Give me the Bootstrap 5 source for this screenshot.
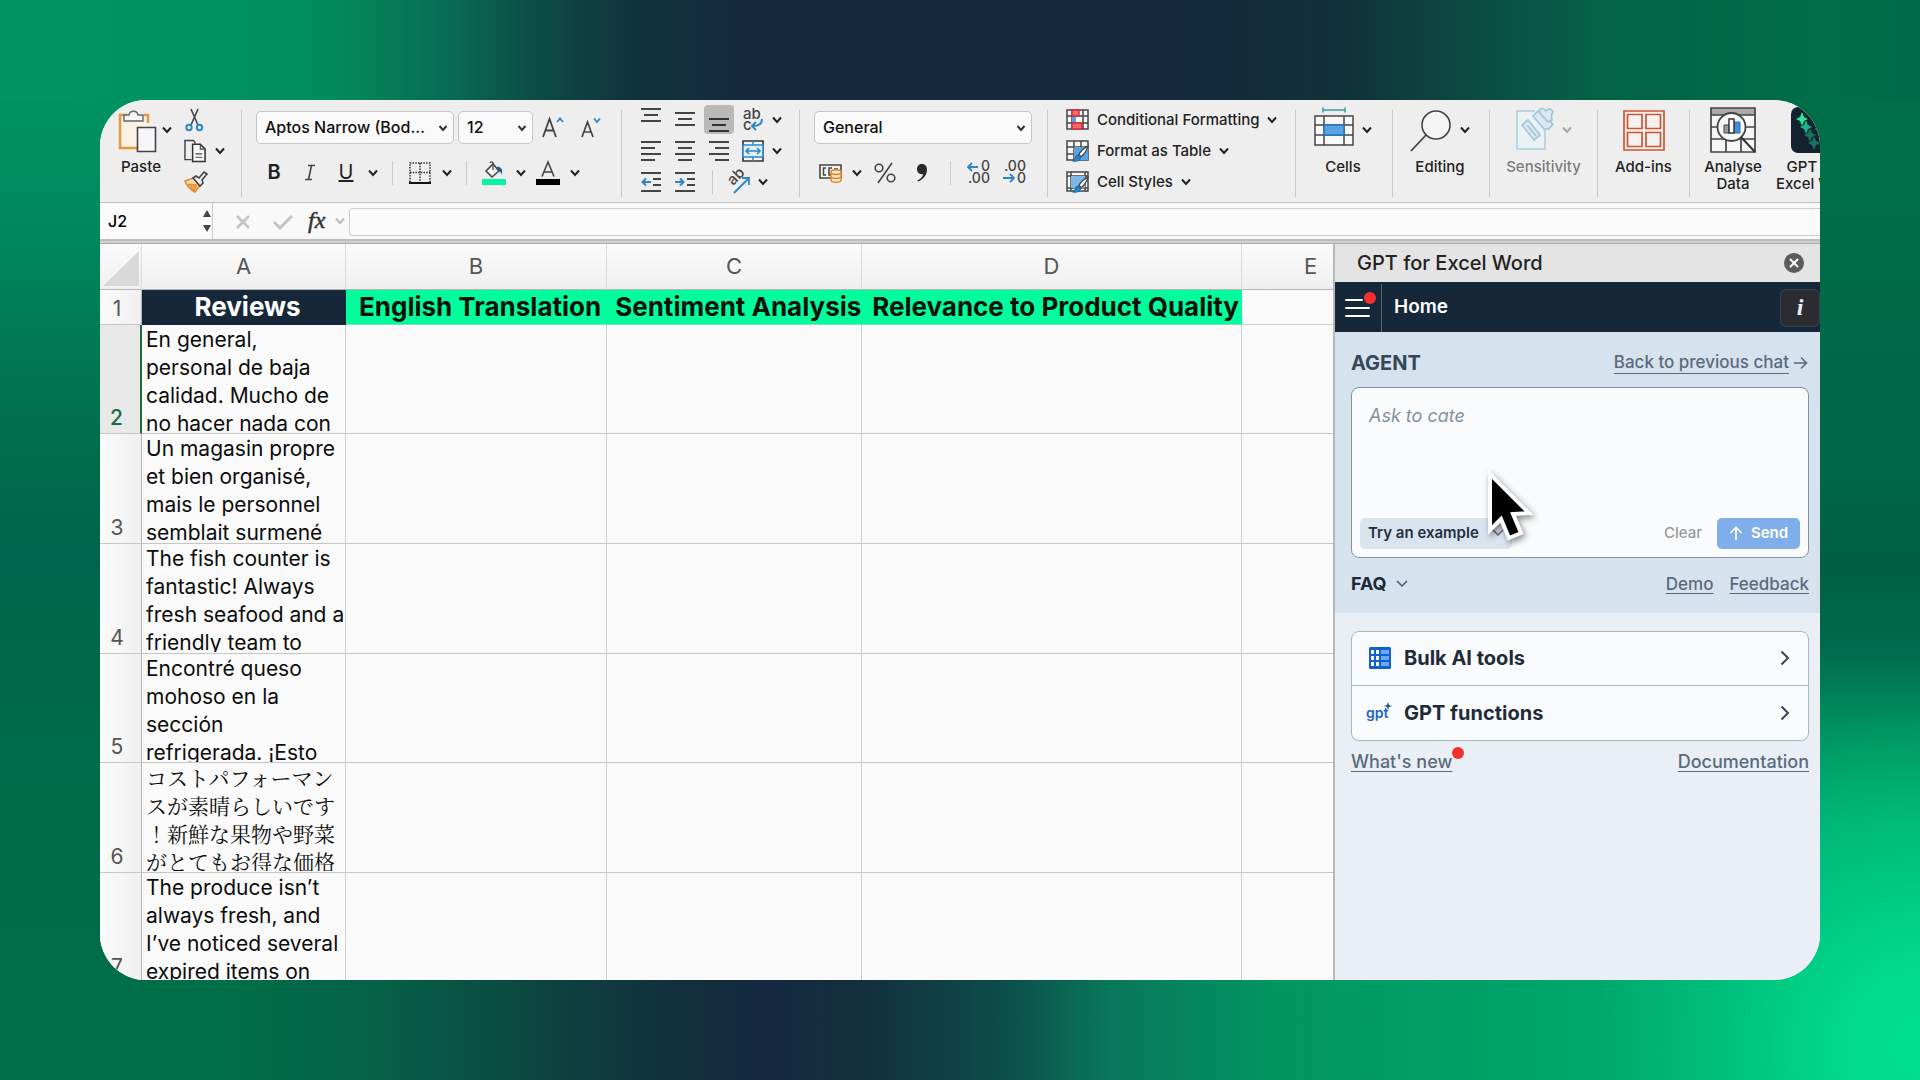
<!DOCTYPE html>
<html lang="en">
<head>
<meta charset="utf-8">
<meta name="viewport" content="width=device-width, initial-scale=1">
<title>GPT for Excel Word</title>
<link href="https://cdn.jsdelivr.net/npm/bootstrap@5.3.0/dist/css/bootstrap.min.css" rel="stylesheet">
<style>
:root{--ink:#222;--navy:#17273a;--mint:#00ff9c;--rule:#c9c9c9;--slate:#5a6b7e}
body{font-family:Inter,"Liberation Sans",sans-serif;color:var(--ink);margin:0}
button{background:none;border:0;padding:0;color:inherit;font:inherit}
svg{display:block;flex:none;overflow:visible}
.stage{height:100vh;padding:100px;background:
 radial-gradient(ellipse 340px 360px at 100% 97%,rgba(0,224,144,1) 0,rgba(0,224,144,.88) 23%,rgba(0,224,144,.45) 56%,rgba(0,224,144,0) 95%),
 linear-gradient(90deg,#009562 0,#00905f 15%,#058358 19%,#076a54 23.6%,#0c4c45 28%,#11333d 33%,#14283e 39.5%,#14283e 60.5%,#112f39 69%,#0c4a42 76.5%,#046246 83%,#006e48 95%,#006a48 100%) top/100% 101px no-repeat,
 linear-gradient(90deg,#006e48 0,#006e48 12%,#056046 20%,#0c4540 28%,#12303c 35%,#142840 40%,#13303d 45%,#0c4c49 52%,#08785a 58%,#019461 66%,#00a067 76%,#00a86c 84%,#00ab6e 100%) bottom/100% 101px no-repeat,
 linear-gradient(180deg,#009562 0,#009060 14%,#00835a 25%,#006e4c 40%,#00644a 52%,#006a48 62%,#006e48 91%) left/50% 100% no-repeat,
 linear-gradient(180deg,#006e48 0,#006e48 18%,#006446 44%,#005f42 53%,#006b4c 60%,#008e5e 67%,#00a46a 76%,#00ab6e 91%) right/50% 100% no-repeat}
.app{border-radius:46px;overflow:hidden;background:#fafafa;position:relative}
/* ribbon */
.ribbon{height:103px;background:#eee;border-bottom:1px solid #c0c0c0;white-space:nowrap;overflow:hidden;font-size:15px;font-weight:500;line-height:17px}
.ribbon>*{flex:none}
.sep{width:1px;height:87px;margin-top:10px;background:var(--rule)}
.div{width:20px;flex:none}
.div i{display:block;width:1px;height:24px;margin:auto;background:var(--rule)}
.w34{width:34px}.w36{width:36px}.w18{width:18px}.w38{width:38px}
.tool{display:flex;align-items:center;justify-content:center;height:31px;flex:none}
.tool.on{background:#b9b9b9;border-radius:4px;height:29px;width:30px;margin:0 2px}
.rows{padding-top:4px}
.g-align .w18{width:14px}
.two{padding-top:11px}
.two .line{margin-top:13px;height:31px}
.big{padding-top:7px;text-align:center}
.big .pic{height:46px;margin-bottom:5px}
.g-clip{width:141px;padding-left:18px}.g-font{width:379px;padding-left:14px}.g-align{width:177px;padding-left:12px}
.g-num{width:247px;padding-left:14px}.g-style{width:247px;padding-left:18px}
.g-96{width:94px;margin-right:2px}.g-107{width:107px}.g-91{width:91px}.g-86{width:86px}.g-76{width:76px}
.ribbon select{appearance:none;height:33px;border:1px solid #c6c6c6;border-radius:5px;background:#fafafa url("data:image/svg+xml,%3Csvg xmlns='http://www.w3.org/2000/svg' width='10' height='8'%3E%3Cpath d='M1.500 2l3.500 4L8.500 2' fill='none' stroke='%23333' stroke-width='2'/%3E%3C/svg%3E") no-repeat right 5px center;font-size:16px;font-weight:500;padding:0 18px 0 8px;color:#111}
.s-face{width:198px}.s-size{width:75px}.s-fmt{width:218px}
.gly{font-size:20px}
/* formula bar */
.fbar{height:36px;background:#f9f9f9}
.fbar .tool{padding-top:3px}
.namebox{width:113px;border-right:1px solid var(--rule);background:#fbfbfb;margin-right:12px}
.namebox input{width:80px;border:0;background:none;font-size:16px;font-weight:500;padding:0 0 0 8px}
.fbar .fin{border:1px solid #cfcfcf;border-right:0;border-radius:4px 0 0 4px;background:#fbfbfb;height:28px;margin:5px 0 0 4px;outline:0}
.band{height:5px;background:#d0d0d0;border-top:2px solid #bcbcbc;border-bottom:1px solid #aaa}
/* sheet */
.sheet{overflow:hidden;min-width:0;background:#fafafa}
.grid{table-layout:fixed;width:1280px;border-collapse:separate;border-spacing:0}
.grid th,.grid td{padding:0;border-right:1px solid #cecece;border-bottom:1px solid #c6c6c6;overflow:hidden}
.grid thead th{height:46px;background:linear-gradient(#fbfbfb,#f0f0f0);border-bottom-color:#b5b5b5;border-right-color:#dcdcdc;font-size:22px;font-weight:400;color:#555;text-align:center;vertical-align:middle}
.grid tbody th{background:linear-gradient(90deg,#fbfbfb,#f0f0f0);border-right-color:#b5b5b5;font-size:21px;font-weight:400;color:#555;text-align:center;vertical-align:bottom;line-height:25px;padding:0 7px 3px 0}
.grid .titles th,.grid .titles td{height:35px}
.grid .titles td{font-size:26px;font-weight:700;line-height:34px;color:#06110c;white-space:pre;text-align:center;border-color:var(--mint);border-bottom-color:#7fe0b5;background:var(--mint);padding-left:2px}
.grid .titles td.rev{background:var(--navy);color:#fff;border-color:var(--navy)}
.grid .titles td.none{background:#fafafa;border-color:#cecece}
.grid .rec td{height:110px}
.grid .rec:nth-child(3n+2) td{height:109px}
.txt{height:108px;overflow:hidden;padding:1px 0 0 4px;font-size:21px;line-height:28px;color:#0c0c0c;white-space:nowrap}
.jp{font-family:"Noto Serif CJK JP","Noto Sans CJK JP",sans-serif;padding-top:0}
.grid .sel th{background:#e9e9e9;color:#1c6b43;font-weight:500;border-right:2px solid #1c6b43}
/* pane */
.pane{width:487px;flex:none;border-left:2px solid #b5b8bc;background:#e9eff5}
.ptitle{height:38px;background:#e4e4e4;font-size:20px;font-weight:500;padding:0 16px 0 22px}
.pnav{height:50px;background:var(--navy);color:#fff;padding-top:2px}
.burger{width:47px;border-right:1px solid #56657a;padding-left:10px}
.home{font-size:19px;font-weight:600;padding-left:12px}
.info{width:40px;height:38px;border:1px solid #3a4656;border-radius:6px;background:#2b2c31;font:italic 700 24px "Liberation Serif",serif;color:#eee}
.agent{background:#d6e2ed;padding:18px 11px 0 16px;height:281px}
.agent h2{font-size:20px;font-weight:700;color:#34475a;line-height:26px;margin:0}
.pane a{color:var(--slate);font-weight:500;text-decoration:underline;text-underline-offset:3px;text-decoration-thickness:1px}
.pane .back{text-underline-offset:5px}
.f17{font-size:17px}.f18{font-size:18px}
.ask{margin-top:11px;height:171px;border:1px solid #7e93a6;border-radius:8px;background:#fafbfc;padding:8px}
.ask textarea{flex:1;border:0;outline:0;resize:none;background:none;font-size:18px;line-height:24px;padding:8px 9px}
.ask textarea::placeholder{font-style:italic;color:#84919d;opacity:1}
.try{height:31px;width:152px;border-radius:5px;background:#dae4ee;font-size:15px;font-weight:600;color:#22303f;padding:0 8px}
.clear{color:#999;font-size:15px;font-weight:500}
.send{height:31px;width:83px;border-radius:5px;background:#80aeea;color:#fff;font-size:15px;font-weight:600;margin-left:15px}
.faqrow{margin-top:16px;line-height:20px}
.faq{font-size:18px;font-weight:700;color:#1c2937}
.tools{margin:18px 11px 0 16px}
.tools .list-group-item{height:55px;border-color:#a9b6c6;background:#fafbfc;font-size:20px;font-weight:700;color:#1f2b38;padding:0 18px 0 14px;text-decoration:none}
.list-group{--bs-list-group-border-radius:8px}
.foot{margin:7px 11px 0 16px}
.dot{position:absolute;width:12px;height:12px;border-radius:50%;background:#f5302f}
.d-burger{left:29px;top:8px}.d-new{right:-12px;top:-1px}
.ptr{position:absolute;left:1384px;top:366px;filter:drop-shadow(2px 3px 3px rgba(0,0,0,.45))}
</style>
<script src="https://cdn.jsdelivr.net/npm/bootstrap@5.3.0/dist/js/bootstrap.bundle.min.js"></script>
</head>
<body>
<svg width="0" height="0" class="position-absolute" aria-hidden="true">
 <symbol id="chev" viewBox="0 0 10 8"><path d="M1 1.500l4 4.500 4-4.500" fill="none" stroke="currentColor" stroke-width="2"/></symbol>
 <symbol id="right" viewBox="0 0 10 16"><path d="M1.500 1.500L8 8l-6.500 6.500" fill="none" stroke="#3a4654" stroke-width="2"/></symbol>
 <symbol id="brush" viewBox="0 0 16 16"><path d="M15 1C11 3 8 6 6.500 9l2 2C11 9 14 5 15 1z" fill="#fff" stroke="#444" stroke-width="1.200"/><path d="M6 9.500c-2 0-2.500 1.500-3 3C2.600 14 2 14.500 1 15c3 .5 6.500 0 7-3z" fill="#2f86cf" stroke="#1b6cb4"/></symbol>
</svg>
<main class="stage">
<div class="app h-100 d-flex flex-column">

 <div class="ribbon d-flex">
  <div class="g-clip d-flex">
   <button class="big align-self-start">
    <span class="pic d-flex align-items-center gap-1">
     <svg width="40" height="46" viewBox="0 0 40 46"><path d="M4 9h25v32H4z" fill="#fbf2e3"/><path d="M9 8H2v33h18M26 8h4v8" fill="none" stroke="#e39a3f" stroke-width="2.500"/><path d="M6 14V8h5c1-5 8-5 9 0h5v6z" fill="#f6f6f6" stroke="#666" stroke-width="1.400"/><path d="M19.500 20.500h18v24h-18z" fill="#f8f6fa" stroke="#444" stroke-width="1.600"/></svg>
     <svg width="10" height="8"><use href="#chev"/></svg></span>
    <span class="d-block me-2">Paste</span>
   </button>
   <div class="rows ms-2 ps-1">
    <button class="tool justify-content-start" aria-label="Cut"><svg width="22" height="24" viewBox="0 0 22 24"><path d="M7 1l7 16M14 1L7 17" stroke="#444" stroke-width="1.600" fill="none"/><g fill="none" stroke="#2b87c8" stroke-width="2"><circle cx="5" cy="19.500" r="2.700"/><circle cx="15.500" cy="19.500" r="2.700"/></g></svg></button>
    <button class="tool gap-2" aria-label="Copy"><svg width="23" height="24" viewBox="0 0 24 24"><path d="M8 21H1V1h9l2 3" fill="none" stroke="#444" stroke-width="1.500"/><path d="M9 5h8l5 5v13H9z" fill="#f8f8f8" stroke="#333" stroke-width="1.600"/><path d="M17 5v5h5M12 15h7M12 18.500h7" fill="none" stroke="#444" stroke-width="1.200"/></svg><svg width="10" height="8"><use href="#chev"/></svg></button>
    <button class="tool justify-content-start" aria-label="Format painter"><svg width="24" height="22" viewBox="0 0 24 22"><path d="M1 10l8-3 7 7-5 7C7 19 3 15 1 10z" fill="#f7dcb4" stroke="#e0862b" stroke-width="1.500"/><path d="M4 13l9 1-3 6z" fill="#f0a24a" stroke="#e0862b"/><path d="M9 7l3-2 3 2 5-6 3 2-5 6 1 3-3 3z" fill="#eee" stroke="#444" stroke-width="1.600"/></svg></button>
   </div>
  </div>
  <div class="sep"></div>
  <div class="g-font two">
   <div class="d-flex align-items-center">
    <select class="s-face" aria-label="Font"><option>Aptos Narrow (Bod...</option></select>
    <select class="s-size ms-1" aria-label="Font size"><option>12</option></select>
    <button class="ms-2" aria-label="Grow font"><svg width="24" height="26" viewBox="0 0 24 26"><path d="M2 22L8.500 4 15 22M4.500 15.500h8" fill="none" stroke="#444" stroke-width="1.800"/><path d="M16 7l3-3.500L22 7" fill="none" stroke="#2b87c8" stroke-width="1.800"/></svg></button>
    <button class="ms-3" aria-label="Shrink font"><svg width="22" height="26" viewBox="0 0 22 26"><path d="M1 22L6.500 7 12 22M3 17h7" fill="none" stroke="#444" stroke-width="1.700"/><path d="M13 3.500L16 7l3-3.500" fill="none" stroke="#2b87c8" stroke-width="1.800"/></svg></button>
   </div>
   <div class="line d-flex align-items-center">
    <button class="tool w36 gly fw-semibold">B</button>
    <button class="tool w36" aria-label="Italic"><svg width="12" height="18" viewBox="0 0 12 18"><path d="M4 1.500h7M1 15.500h7M7.500 1.500l-3 14" fill="none" stroke="#444" stroke-width="1.600"/></svg></button>
    <button class="tool w36 gly fw-normal text-decoration-underline">U</button>
    <button class="tool w18" aria-label="Underline options"><svg width="10" height="8"><use href="#chev"/></svg></button>
    <span class="div"><i></i></span>
    <button class="tool w36" aria-label="Borders"><svg width="22" height="22" viewBox="0 0 22 22"><path d="M1 20V1h20v19M11 1v19M1 10.500h20" fill="none" stroke="#333" stroke-width="1.500" stroke-dasharray="1.500 1.200"/><path d="M0 21h22" stroke="#111" stroke-width="2"/></svg></button>
    <button class="tool w18" aria-label="Border options"><svg width="10" height="8"><use href="#chev"/></svg></button>
    <span class="div"><i></i></span>
    <button class="tool w36" aria-label="Fill colour"><svg width="24" height="24" viewBox="0 0 24 24"><path d="M4 10l7-7 6 7-7 6z" fill="#f4f4f4" stroke="#444" stroke-width="1.600"/><path d="M11 9V2c0-1.500-3-1.500-3 0" fill="none" stroke="#444" stroke-width="1.200"/><path d="M15 6c4-1 6 3 5 8-1-3-2-4-4-4z" fill="#1b5c93"/><path d="M0 18h24v6H0z" fill="#0cf3a0"/></svg></button>
    <button class="tool w18" aria-label="Fill options"><svg width="10" height="8"><use href="#chev"/></svg></button>
    <button class="tool w36" aria-label="Font colour"><svg width="24" height="24" viewBox="0 0 24 24"><path d="M6 15.500L12 1l6 14.500M8 11h8" fill="none" stroke="#444" stroke-width="1.600"/><path d="M0 18h24v6H0z" fill="#000"/></svg></button>
    <button class="tool w18" aria-label="Font colour options"><svg width="10" height="8"><use href="#chev"/></svg></button>
   </div>
  </div>
  <div class="sep"></div>
  <div class="g-align rows">
   <div class="d-flex align-items-center">
    <button class="tool w34" aria-label="Align top"><svg width="20" height="24" viewBox="0 0 20 24"><path d="M0 1h20M3 7h14M0 13h20" stroke="#444" stroke-width="2"/></svg></button>
    <button class="tool w34" aria-label="Align middle"><svg width="20" height="24" viewBox="0 0 20 24"><path d="M0 5h20M3 11h14M0 17h20" stroke="#444" stroke-width="2"/></svg></button>
    <button class="tool on" aria-label="Align bottom"><svg width="20" height="24" viewBox="0 0 20 24"><path d="M0 11h20M3 17h14M0 23h20" stroke="#333" stroke-width="2"/></svg></button>
    <button class="tool w34" aria-label="Wrap text"><svg width="20" height="26" viewBox="0 0 20 26"><text x="0" y="12" font-size="15" fill="#444">ab</text><text x="0" y="23" font-size="15" fill="#444">c</text><path d="M19 12c0 5-3 7-9 7M13 15l-4 4 4 4" fill="none" stroke="#2b87c8" stroke-width="2"/></svg></button>
    <button class="tool w18" aria-label="Wrap options"><svg width="10" height="8"><use href="#chev"/></svg></button>
   </div>
   <div class="d-flex align-items-center">
    <button class="tool w34" aria-label="Align left"><svg width="20" height="20" viewBox="0 0 20 20"><path d="M0 1h20M0 7h14M0 13h20M0 19h14" stroke="#444" stroke-width="2"/></svg></button>
    <button class="tool w34" aria-label="Align centre"><svg width="20" height="20" viewBox="0 0 20 20"><path d="M0 1h20M3 7h14M0 13h20M3 19h14" stroke="#444" stroke-width="2"/></svg></button>
    <button class="tool w34" aria-label="Align right"><svg width="20" height="20" viewBox="0 0 20 20"><path d="M0 1h20M6 7h14M0 13h20M6 19h14" stroke="#444" stroke-width="2"/></svg></button>
    <button class="tool w34" aria-label="Merge"><svg width="22" height="22" viewBox="0 0 22 22"><path d="M1 1h20v20H1z" fill="#f6f6f6" stroke="#333" stroke-width="1.600"/><path d="M1 5h20v12H1zM11 1v4M11 17v4" fill="#dff0fa" stroke="#2b87c8" stroke-width="1.500"/><path d="M4 11h14M7 8l-3 3 3 3M15 8l3 3-3 3" fill="none" stroke="#2b87c8" stroke-width="1.600"/></svg></button>
    <button class="tool w18" aria-label="Merge options"><svg width="10" height="8"><use href="#chev"/></svg></button>
   </div>
   <div class="d-flex align-items-center">
    <button class="tool w34" aria-label="Decrease indent"><svg width="20" height="20" viewBox="0 0 20 20"><path d="M0 1h20M12 7h8M12 13h8M0 19h20" stroke="#444" stroke-width="2"/><path d="M1 10h9M5 6.500L1.500 10 5 13.500" fill="none" stroke="#2b87c8" stroke-width="2"/></svg></button>
    <button class="tool w34" aria-label="Increase indent"><svg width="20" height="20" viewBox="0 0 20 20"><path d="M0 1h20M12 7h8M12 13h8M0 19h20" stroke="#444" stroke-width="2"/><path d="M0 10h9M5 6.500L8.500 10 5 13.500" fill="none" stroke="#2b87c8" stroke-width="2"/></svg></button>
    <span class="div"><i></i></span>
    <button class="tool w34" aria-label="Orientation"><svg width="24" height="24" viewBox="0 0 24 24"><text transform="translate(6 16) rotate(-45)" font-size="15" fill="#444">ab</text><path d="M7 23L22 8M15 8h7v7" fill="none" stroke="#2b87c8" stroke-width="1.800"/></svg></button>
    <button class="tool w18" aria-label="Orientation options"><svg width="10" height="8"><use href="#chev"/></svg></button>
   </div>
  </div>
  <div class="sep"></div>
  <div class="g-num two">
   <select class="s-fmt" aria-label="Number format"><option>General</option></select>
   <div class="line d-flex align-items-center">
    <button class="tool w34" aria-label="Currency"><svg width="24" height="20" viewBox="0 0 24 20"><path d="M1 2h21v13H1z" fill="#f4f4f4" stroke="#444" stroke-width="1.600"/><path d="M7 5H4.500v7H7M13 5h-3v7h2M15 6h4" fill="none" stroke="#444" stroke-width="1.500"/><path d="M12 9c0-3 10-3 10 0v8c0 3-10 3-10 0z" fill="#fbe9d4" stroke="#e0862b" stroke-width="1.500"/><path d="M12 9.500c0 2.500 10 2.500 10 0M12 13.500c0 2.500 10 2.500 10 0" fill="none" stroke="#e0862b" stroke-width="1.500"/></svg></button>
    <button class="tool w18" aria-label="Currency options"><svg width="10" height="8"><use href="#chev"/></svg></button>
    <button class="tool w38" aria-label="Percent"><svg width="22" height="20" viewBox="0 0 22 20"><g fill="none" stroke="#444" stroke-width="1.600"><circle cx="5" cy="5" r="3.800"/><circle cx="17" cy="15" r="3.800"/><path d="M18 0L4 20"/></g></svg></button>
    <button class="tool w36" aria-label="Comma"><svg width="12" height="18" viewBox="0 0 12 18"><path d="M6 0c3.500 0 5 2.500 5 5.500C11 11 7.500 15.500 2 17.500l-.5-1C5 14.500 7 12.500 7 10 3.500 10.800 1 8.500 1 5.300 1 2 3 0 6 0z" fill="#2a2a2a"/></svg></button>
    <span class="div"><i></i></span>
    <button class="tool w36" aria-label="Increase decimal"><svg width="24" height="24" viewBox="0 0 24 24"><text x="15" y="10" font-size="14" fill="#444">0</text><text x="2" y="22" font-size="14" fill="#444">.00</text><path d="M2 6h10M6 2L2 6l4 4" fill="none" stroke="#2b87c8" stroke-width="1.800"/></svg></button>
    <button class="tool w36" aria-label="Decrease decimal"><svg width="24" height="24" viewBox="0 0 24 24"><text x="2" y="10" font-size="14" fill="#444">.00</text><text x="15" y="22" font-size="14" fill="#444">0</text><path d="M1 17h11M8 13l4 4-4 4" fill="none" stroke="#2b87c8" stroke-width="1.800"/></svg></button>
   </div>
  </div>
  <div class="sep"></div>
  <div class="g-style rows">
   <button class="tool gap-2"><svg width="23" height="22" viewBox="0 0 23 22"><path d="M1 1h21v19H1zM1 7h21M1 14h21M6 1v19M17 1v19" fill="#f8f8f8" stroke="#444" stroke-width="1.500"/><path d="M6 1h7v6H6zM6 14h10v6H6z" fill="#f9676b" stroke="#d13238" stroke-width="1.500"/><path d="M6 8h4v5H6z" fill="#5ba4e0"/></svg>Conditional Formatting<svg width="10" height="8"><use href="#chev"/></svg></button>
   <button class="tool gap-2"><svg width="23" height="22" viewBox="0 0 23 22"><path d="M1 1h21v19H1zM1 7h21M1 14h21M8 1v19M15 1v19" fill="#f8f8f8" stroke="#444" stroke-width="1.500"/><path d="M8 7h14v13H8z" fill="#5ba4e0"/><svg x="6" y="5" width="17" height="17"><use href="#brush"/></svg></svg>Format as Table<svg width="10" height="8"><use href="#chev"/></svg></button>
   <button class="tool gap-2"><svg width="23" height="22" viewBox="0 0 23 22"><path d="M1 1h21v19H1zM1 5h21M5 1v19M19 1v19M1 17h21" fill="#f8f8f8" stroke="#444" stroke-width="1.500"/><path d="M5 5h14v12H5z" fill="#7db7e8"/><svg x="6" y="5" width="17" height="17"><use href="#brush"/></svg></svg>Cell Styles<svg width="10" height="8"><use href="#chev"/></svg></button>
  </div>
  <div class="sep"></div>
  <button class="big g-96 align-self-start"><span class="pic d-flex align-items-center justify-content-center gap-2"><svg width="40" height="46" viewBox="0 0 40 46"><path d="M9 3h22M9 .5v5M31 .5v5" stroke="#3a9aa0" stroke-width="1.500"/><path d="M1 9h38v29H1zM1 18h38M1 28h38M10 9v29M30 9v29" fill="#f8f8f8" stroke="#444" stroke-width="1.500"/><path d="M10 18h20v10H10z" fill="#5aa2e2" stroke="#2277c0" stroke-width="1.500"/></svg><svg width="10" height="8"><use href="#chev"/></svg></span><span class="d-block">Cells</span></button>
  <div class="sep"></div>
  <button class="big g-96 align-self-start"><span class="pic d-flex align-items-center justify-content-center gap-2"><svg width="42" height="46" viewBox="0 0 42 46"><circle cx="26" cy="18" r="14" fill="#f5f5f5" stroke="#444" stroke-width="1.600"/><path d="M16 28L1 44" stroke="#444" stroke-width="1.800"/></svg><svg width="10" height="8"><use href="#chev"/></svg></span><span class="d-block">Editing</span></button>
  <div class="sep"></div>
  <button class="big g-107 align-self-start" disabled><span class="pic d-flex align-items-center justify-content-center gap-2 text-black-50"><svg width="38" height="46" viewBox="0 0 38 46"><path d="M19 4H1v38h28V22" fill="#ebf2f6" stroke="#a9cce0" stroke-width="1.500"/><g fill="#d9e8f1" stroke="#a4c6da" stroke-width="1.700"><path d="M6 18l6-5 12 15-6 5z"/><path d="M11 18l9 11"/><path d="M17 9l5-5 15 13-4 5H28z"/><path d="M24 6c-2-5 3-6 6-2 2-3 5-3 7 1-2 2-2 4-1 8l-4 2z"/></g></svg><svg width="10" height="8" opacity=".6"><use href="#chev"/></svg></span><span class="d-block text-black-50">Sensitivity</span></button>
  <div class="sep"></div>
  <button class="big g-91 align-self-start"><span class="pic d-flex justify-content-center"><svg width="42" height="46" viewBox="0 0 42 46"><path d="M1 4h40v39H1z" fill="#fbeee9" stroke="#c8573a" stroke-width="1.700"/><path d="M4.500 7.500h14.500v14H4.500zM23 7.500h14.500v14H23zM4.500 25.500h14.500v14H4.500zM23 25.500h14.500v14H23z" fill="#f5f1ef" stroke="#c8573a" stroke-width="1.700"/></svg></span><span class="d-block">Add-ins</span></button>
  <div class="sep"></div>
  <button class="big g-86 align-self-start"><span class="pic d-flex justify-content-center"><svg width="46" height="46" viewBox="0 0 46 46"><path d="M1 1h44v44H1z" fill="#f6f6f6"/><path d="M1 1h44v7H1z" fill="#aaa"/><path d="M1 1h44v44H1zM1 8h44M1 20h10M35 20h10M1 32h44M16 32v13M31 32v13" fill="none" stroke="#444" stroke-width="1.700"/><circle cx="21.500" cy="20" r="14" fill="#f7f7f7" stroke="#444" stroke-width="1.800"/><path d="M31 30l14 15" stroke="#333" stroke-width="2"/><path d="M14 18h5v8h-5z" fill="#999" stroke="#444"/><path d="M24 15h6v11h-6z" fill="#3f8fd6" stroke="#2a6fb0"/><path d="M19 12h5v14h-5z" fill="#fff" stroke="#333" stroke-width="1.500"/></svg></span><span class="d-block">Analyse<br>Data</span></button>
  <button class="big g-76 align-self-start"><span class="pic d-flex justify-content-center"><svg width="46" height="46" viewBox="0 0 46 46"><rect width="46" height="46" rx="7" fill="#12222f"/><path d="M11 5l2 5 4 2-4 2-2 5-2-5-4-2 4-2z" fill="#2ee59d"/><path d="M15 13l2 5 4 2-4 2-2 5-2-5-4-2 4-2z" fill="#1db584"/><path d="M19 21l2 5 4 2-4 2-2 5-2-5-4-2 4-2zM23 29l2 5 4 2-4 2-2 5-2-5-4-2 4-2zM28 17l1 4 4 1-4 2-1 4-2-4-3-2 3-1z" fill="#17745f"/></svg></span><span class="d-block">GPT for<br>Excel Word</span></button>
 </div>

 <div class="fbar d-flex flex-shrink-0">
  <div class="namebox d-flex align-items-center justify-content-between">
   <input value="J2" aria-label="Name box">
   <svg width="10" height="24" viewBox="0 0 10 24"><path d="M1 8L5 1l4 7zM1 16l4 7 4-7z" fill="#444"/></svg>
  </div>
  <button class="tool align-self-center w36" aria-label="Cancel"><svg width="16" height="16" viewBox="0 0 16 16"><path d="M2 2l12 12M14 2L2 14" stroke="#c4c4c4" stroke-width="2.600"/></svg></button>
  <button class="tool align-self-center w36 ms-1" aria-label="Enter"><svg width="20" height="16" viewBox="0 0 20 16"><path d="M1 8l6 6L19 2" fill="none" stroke="#c4c4c4" stroke-width="3"/></svg></button>
  <button class="tool align-self-center w34" aria-label="Insert function"><svg width="22" height="24" viewBox="0 0 22 24"><text x="1" y="18" font-family="Liberation Serif" font-style="italic" font-size="24" fill="#333" stroke="#333" stroke-width=".5">fx</text></svg></button>
  <svg class="align-self-center" width="10" height="8" color="#bbb"><use href="#chev"/></svg>
  <input class="fin flex-grow-1" aria-label="Formula">
 </div>
 <div class="band flex-shrink-0"></div>

 <div class="d-flex flex-grow-1 overflow-hidden">
  <div class="sheet flex-grow-1">
   <table class="grid">
    <colgroup><col width="42"><col width="204"><col width="261"><col width="255"><col width="380"><col width="138"></colgroup>
    <thead><tr><th aria-label="Select all"><svg width="42" height="44" viewBox="0 0 42 44"><path d="M39 7v35H3z" fill="#d9d9d9"/></svg></th><th>A</th><th>B</th><th>C</th><th>D</th><th>E</th></tr></thead>
    <tbody>
     <tr class="titles"><th>1</th><td class="rev"> Reviews</td><td> English Translation</td><td> Sentiment Analysis</td><td> Relevance to Product Quality</td><td class="none"></td></tr>
     <tr class="rec sel"><th>2</th><td><div class="txt">En general,<br>personal de baja<br>calidad. Mucho de<br>no hacer nada con</div></td><td></td><td></td><td></td><td></td></tr>
     <tr class="rec"><th>3</th><td><div class="txt">Un magasin propre<br>et bien organisé,<br>mais le personnel<br>semblait surmené</div></td><td></td><td></td><td></td><td></td></tr>
     <tr class="rec"><th>4</th><td><div class="txt">The fish counter is<br>fantastic! Always<br>fresh seafood and a<br>friendly team to</div></td><td></td><td></td><td></td><td></td></tr>
     <tr class="rec"><th>5</th><td><div class="txt">Encontré queso<br>mohoso en la<br>sección<br>refrigerada. ¡Esto</div></td><td></td><td></td><td></td><td></td></tr>
     <tr class="rec"><th>6</th><td><div class="txt jp" lang="ja">コストパフォーマン<br>スが素晴らしいです<br>！新鮮な果物や野菜<br>がとてもお得な価格</div></td><td></td><td></td><td></td><td></td></tr>
     <tr class="rec"><th>7</th><td><div class="txt">The produce isn’t<br>always fresh, and<br>I’ve noticed several<br>expired items on</div></td><td></td><td></td><td></td><td></td></tr>
    </tbody>
   </table>
  </div>

  <aside class="pane">
   <div class="ptitle d-flex align-items-center justify-content-between">GPT for Excel Word
    <button aria-label="Close"><svg width="20" height="20" viewBox="0 0 20 20"><circle cx="10" cy="10" r="10" fill="#5c5c5c"/><path d="M6 6l8 8M14 6l-8 8" stroke="#fff" stroke-width="2"/></svg></button></div>
   <div class="pnav d-flex align-items-center">
    <button class="burger h-100 position-relative" aria-label="Menu"><svg width="25" height="20" viewBox="0 0 25 20"><path d="M1 2h16M1 10h23M1 18h23" stroke="#fff" stroke-width="2" stroke-linecap="round"/></svg><span class="dot d-burger"></span></button>
    <span class="home">Home</span>
    <button class="info ms-auto">i</button>
   </div>
   <section class="agent">
    <div class="d-flex justify-content-between align-items-center"><h2>AGENT</h2>
     <span class="d-flex align-items-center gap-1"><a href="#" class="f17 back">Back to previous chat</a><svg width="16" height="14" viewBox="2 0 16 14"><path d="M3 7h12.500M10 1.500L15.500 7 10 12.500" fill="none" stroke="#5a6b7e" stroke-width="1.600"/></svg></span></div>
    <div class="ask d-flex flex-column">
     <textarea placeholder="Ask to cate" aria-label="Ask"></textarea>
     <div class="d-flex align-items-center">
      <button class="try d-flex align-items-center justify-content-between">Try an example<svg width="12" height="8" viewBox="0 0 12 8"><path d="M1 1l5 5 5-5" fill="none" stroke="#5a6b7e" stroke-width="1.500"/></svg></button>
      <button class="clear ms-auto">Clear</button>
      <button class="send d-flex align-items-center justify-content-center gap-2"><svg width="14" height="14" viewBox="0 0 14 14"><path d="M7 14V1.500M1.500 7L7 1.500 12.500 7" fill="none" stroke="#fff" stroke-width="1.700"/></svg>Send</button>
     </div>
    </div>
    <div class="faqrow d-flex align-items-center">
     <button class="faq d-flex align-items-center gap-2">FAQ<svg width="14" height="8" viewBox="0 0 14 8"><path d="M2 1l5 5 5-5" fill="none" stroke="#4a5a6c" stroke-width="1.500"/></svg></button>
     <a href="#" class="ms-auto f17">Demo</a><a href="#" class="ms-3 f17">Feedback</a></div>
   </section>
   <div class="tools list-group">
    <a href="#" class="list-group-item d-flex align-items-center"><svg width="26" height="22" viewBox="0 0 26 22"><rect x="3" width="22" height="22" rx="1.500" fill="#0d62d0"/><path d="M5 3h3v4H5zM10 3h3v4h-3zM5 9h3v4H5zM10 9h3v4h-3zM5 15h3v4H5zM10 15h3v4h-3z" fill="#fff"/><path d="M15 3h8v4h-8zM15 9h8v4h-8zM15 15h8v4h-8z" fill="#6aa7f5"/></svg><span class="ms-2 ps-1">Bulk AI tools</span><svg class="ms-auto" width="10" height="16"><use href="#right"/></svg></a>
    <a href="#" class="list-group-item d-flex align-items-center"><svg width="26" height="22" viewBox="0 0 26 22"><text x="0" y="16" font-size="14" font-weight="600" fill="#1c66c4">gpt</text><path d="M22 0l1 3 3 1-3 1-1 3-1-3-3-1 3-1z" fill="#1c4f9c"/></svg><span class="ms-2 ps-1">GPT functions</span><svg class="ms-auto" width="10" height="16"><use href="#right"/></svg></a>
   </div>
   <div class="foot d-flex justify-content-between f18"><span class="position-relative"><a href="#">What's new</a><span class="dot d-new"></span></span><a href="#">Documentation</a></div>
  </aside>
 </div>
 <svg class="ptr" width="54" height="76" viewBox="0 0 54 76"><path d="M6 8v56l11-11 8 19 12-5-8-19 16-1z" fill="#000" stroke="#fff" stroke-width="4"/></svg>
</div>
</main>
</body>
</html>
